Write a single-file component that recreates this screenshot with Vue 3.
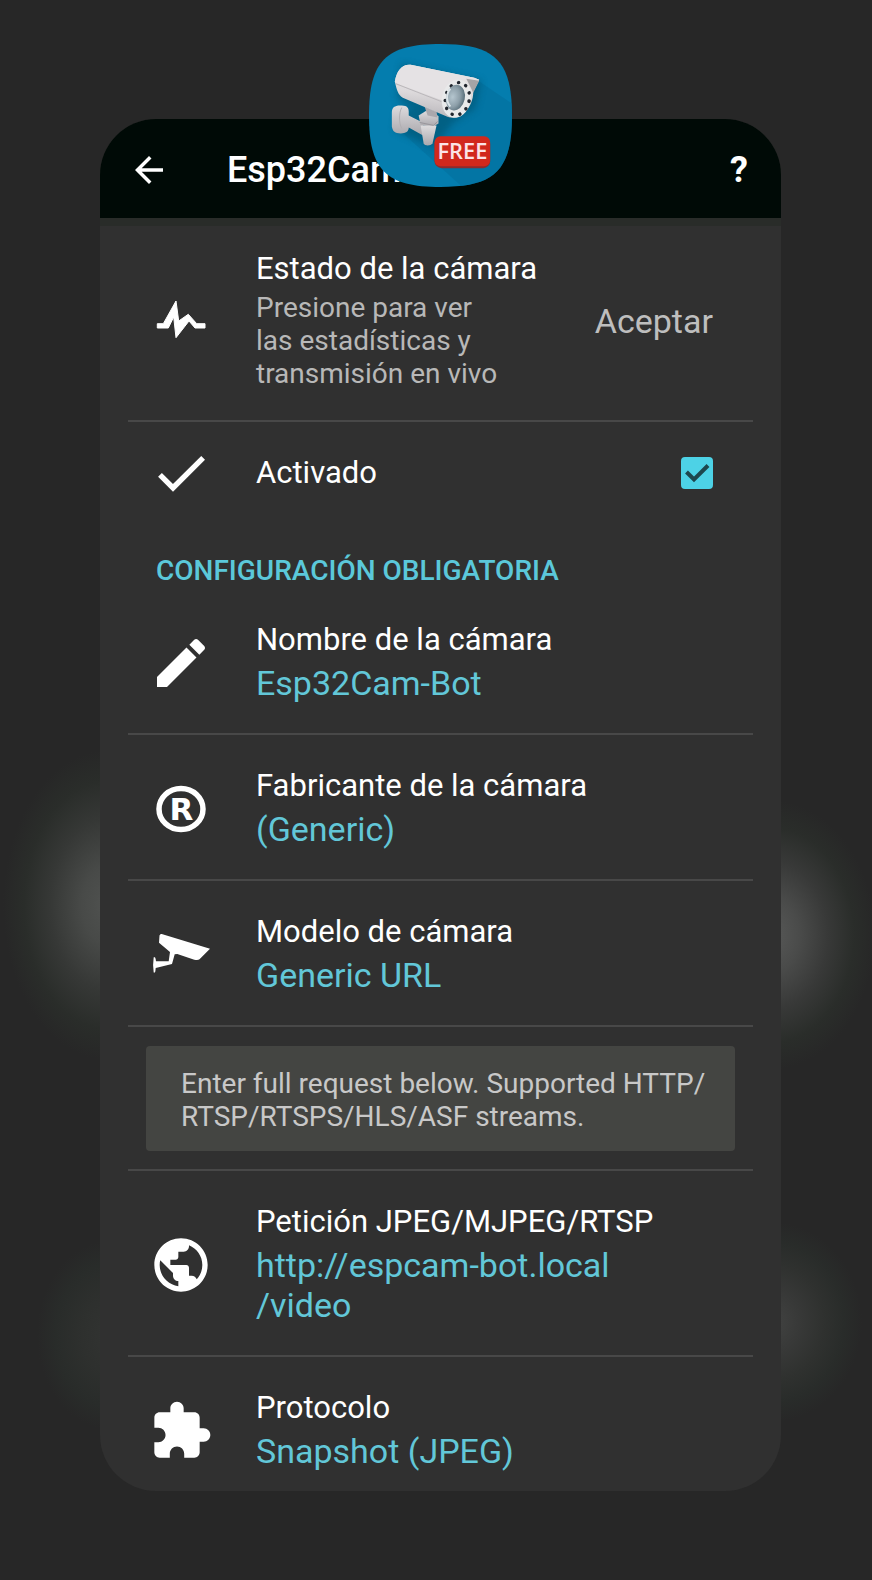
<script setup>
import { ref } from 'vue'

const enabled = ref(true)

const icons = {
  edit: 'M3 17.25V21h3.75L17.81 9.94l-3.75-3.75L3 17.25zM20.71 7.04c.39-.39.39-1.02 0-1.41l-2.34-2.34c-.39-.39-1.02-.39-1.41 0l-1.83 1.83 3.75 3.75 1.83-1.83z',
  globe: 'M12 2C6.48 2 2 6.48 2 12s4.48 10 10 10 10-4.48 10-10S17.52 2 12 2zm-1 17.93c-3.95-.49-7-3.85-7-7.93 0-.62.08-1.21.21-1.79L9 15v1c0 1.1.9 2 2 2v1.93zm6.9-2.54c-.26-.81-1-1.39-1.9-1.39h-1v-3c0-.55-.45-1-1-1H8v-2h2c.55 0 1-.45 1-1V7h2c1.1 0 2-.9 2-2v-.41c2.93 1.19 5 4.06 5 7.41 0 2.08-.8 3.97-2.1 5.39z',
  puzzle: 'M20.5 11H19V7c0-1.1-.9-2-2-2h-4V3.5C13 2.12 11.88 1 10.5 1S8 2.12 8 3.5V5H4c-1.1 0-1.99.9-1.99 2v3.8H3.5c1.49 0 2.7 1.21 2.7 2.7s-1.21 2.7-2.7 2.7H2V20c0 1.1.9 2 2 2h3.8v-1.5c0-1.49 1.21-2.7 2.7-2.7 1.49 0 2.7 1.21 2.7 2.7V22H17c1.1 0 2-.9 2-2v-4h1.5c1.38 0 2.5-1.12 2.5-2.5S21.88 11 20.5 11z'
}
</script>

<template>
  <div class="stage">
    <div class="window">
      <main class="card">
        <header class="bar">
          <button class="back" type="button" aria-label="Atrás">
            <svg viewBox="0 0 24 24" width="42" height="42"><path fill="#fff" d="M20 11H7.83l5.59-5.59L12 4l-8 8 8 8 1.41-1.41L7.83 13H20v-2z" /></svg>
          </button>
          <h1>Esp32Cam</h1>
          <button class="help" type="button">?</button>
        </header>

        <section class="list">
          <div class="row line">
            <svg class="icon pulse" viewBox="0 0 64 64"><path d="M8.300 34.700H14.300L27 12l2.700 20 9.600-6.700 8.400 9.400H56V39H46l-6-7-13 16.700L24.700 28l-5.400 11h-11z" /></svg>
            <div class="text">
              <h2 class="title">Estado de la cámara</h2>
              <p class="summary">Presione para ver las estadísticas y transmisión en vivo</p>
            </div>
            <button class="accept" type="button">Aceptar</button>
          </div>

          <label class="row">
            <svg class="icon" viewBox="0 0 24 24"><path d="M9 16.170L4.830 12l-1.420 1.410L9 19 21 7l-1.410-1.410z" /></svg>
            <span class="text title">Activado</span>
            <span class="tick">
              <input v-model="enabled" type="checkbox" />
              <svg v-if="enabled" viewBox="0 0 32 32"><path d="M5.500 15l7.500 7.500L27 8.500" /></svg>
            </span>
          </label>

          <h2 class="section">CONFIGURACIÓN OBLIGATORIA</h2>

          <button class="row line" type="button">
            <svg class="icon" viewBox="0 0 24 24"><path :d="icons.edit" /></svg>
            <span class="text">
              <span class="title">Nombre de la cámara</span>
              <span class="value">Esp32Cam-Bot</span>
            </span>
          </button>

          <button class="row line" type="button">
            <svg class="icon" viewBox="0 0 64 64">
              <ellipse cx="32" cy="32" rx="22" ry="20.600" class="ring" />
              <text x="32.500" y="43" class="mark">R</text>
            </svg>
            <span class="text">
              <span class="title">Fabricante de la cámara</span>
              <span class="value">(Generic)</span>
            </span>
          </button>

          <button class="row line" type="button">
            <svg class="icon" viewBox="0 0 64 64"><path d="M12.700 11L61 25.700 50.500 36.300Q49 37.500 45.300 36.700L28.300 31l-2.600.3L23 41 6.700 45Q6.500 48 6 49.500H4.700Q3.500 42 4.700 34.300H6Q6.800 36 7 38.300H19.700L21 29 10 19.700 10.500 12.500Q11 10.500 12.700 11z" /></svg>
            <span class="text">
              <span class="title">Modelo de cámara</span>
              <span class="value">Generic URL</span>
            </span>
          </button>

          <div class="notice line">
            <p>Enter full request below. Supported HTTP/<wbr />RTSP/RTSPS/HLS/ASF streams.</p>
          </div>

          <button class="row line" type="button">
            <svg class="icon" viewBox="0 0 24 24"><path :d="icons.globe" /></svg>
            <span class="text">
              <span class="title">Petición JPEG/MJPEG/RTSP</span>
              <span class="value">http://espcam-bot.local<br />/video</span>
            </span>
          </button>

          <button class="row last" type="button">
            <svg class="icon" viewBox="0 0 24 24"><path :d="icons.puzzle" /></svg>
            <span class="text">
              <span class="title">Protocolo</span>
              <span class="value">Snapshot (JPEG)</span>
            </span>
          </button>
        </section>
      </main>

      <svg class="app" viewBox="0 0 144 144" role="img" aria-label="FREE">
        <defs>
          <clipPath id="shape"><path d="M72 0C127 0 144 17 144 72S127 144 72 144 0 127 0 72 17 0 72 0z" /></clipPath>
          <linearGradient id="body" x1="0.500" y1="0" x2="0.350" y2="1">
            <stop offset="0" stop-color="#e9e7e8" />
            <stop offset="0.550" stop-color="#dcd9db" />
            <stop offset="1" stop-color="#b9b6ba" />
          </linearGradient>
          <linearGradient id="arm" x1="0" y1="0" x2="0" y2="1">
            <stop offset="0" stop-color="#dedcde" />
            <stop offset="1" stop-color="#aaa8ad" />
          </linearGradient>
          <radialGradient id="glass" cx="0.350" cy="0.500" r="0.700">
            <stop offset="0" stop-color="#b5c6cf" />
            <stop offset="0.550" stop-color="#8d9fa9" />
            <stop offset="1" stop-color="#4e6470" />
          </radialGradient>
          <filter id="soft" x="-30%" y="-30%" width="160%" height="160%"><feGaussianBlur stdDeviation="3.500" /></filter>
        </defs>
        <g clip-path="url(#shape)">
          <rect width="144" height="144" fill="#047dae" />
          <path d="M110 37l40 27v60l-36 20H94L30 86l40-10z" fill="#036f9d" opacity="0.550" />
          <path d="M33 20l80 17-6 28-23 15-18 25-40-18 4-24 16 4-18-13z" fill="#02526f" opacity="0.600" filter="url(#soft)" />
          <path d="M23 69c0-5 3-7 8-7 6 0 9 1 9 6v4l12 6 6 10-4 4-14-8c0 4-3 6-8 6-6 0-8-2-9-7z" fill="url(#arm)" />
          <path d="M33 64c-3 5-3 16 0 21" fill="none" stroke="#b0aeb2" />
          <path d="M50 72l8-5 8 2 4 4v7l-5 3-13-1z" fill="url(#arm)" />
          <path d="M52 82h16l-4 18c-2 3-8 3-9 0z" fill="url(#arm)" />
          <path d="M51 79l14 3 4-4" fill="none" stroke="#98969b" />
          <path d="M56 63l12 5 1 6-10-2z" fill="#aaa8ad" />
          <path d="M42 21C33 20 28 27 26 38c2 8 3 13 8 16l42 18c5 3 13 3 19-2 7-6 10-14 10-22l6-12-5-2z" fill="url(#body)" />
          <path d="M29 40l45 17c1-9 6-17 14-21 8-2 15-1 20 2l3-2-5-2-64-13C33 20 28 27 26 38z" fill="#e5e2e4" />
          <path d="M27 40l46 18" fill="none" stroke="#b9b6b9" />
          <path d="M98 35l13 2-6 12z" fill="#a5a4a6" />
          <ellipse cx="88" cy="55" rx="14.500" ry="19.500" transform="rotate(12 88 55)" fill="#e8e9ea" />
          <ellipse cx="89" cy="55" rx="12" ry="16.500" transform="rotate(12 88 55)" fill="none" stroke="#20252d" stroke-width="3.500" stroke-linecap="round" stroke-dasharray="0.100 8" />
          <ellipse cx="87" cy="54" rx="9.500" ry="13" transform="rotate(12 87 54)" fill="url(#glass)" />
          <path d="M82 45c-5 5-4 14 0 18" fill="none" stroke="#dce4e8" stroke-width="2" />
          <rect x="66" y="94" width="56" height="31" rx="7" fill="#8e2a2c" />
          <rect x="66" y="93" width="56" height="30" rx="6" fill="#d1281c" />
          <text x="94" y="116" class="free">FREE</text>
        </g>
      </svg>
    </div>
  </div>
</template>

<style>
body {
  margin: 0;
  background: #272727;
}
</style>

<style scoped>
.stage {
  box-sizing: border-box;
  min-height: 100vh;
  padding: 119px 91px 88px 100px;
  font-family: Roboto, "Noto Sans", sans-serif;
  color: #fff;
  background:
    radial-gradient(105px 155px at 108px 905px, #505250 0%, #484a48 25%, #363836 55%, #2a2d2a 80%, #272727 100%) 0 0 / 50% 1120px no-repeat,
    radial-gradient(75px 95px at 112px 215px, #323432 0%, #2e302e 40%, #292c2a 75%, #272727 100%) 0 1120px / 50% 460px no-repeat,
    radial-gradient(105px 135px at calc(100% - 102px) 935px, #585958 0%, #4a4b4a 28%, #383938 55%, #2a2d2a 80%, #272727 100%) 100% 0 / 50% 1120px no-repeat,
    radial-gradient(90px 100px at calc(100% - 100px) 202px, #424342 0%, #383938 30%, #2f312f 58%, #292c2a 80%, #272727 100%) 100% 1120px / 50% 460px no-repeat,
    #272727;
}

.window {
  position: relative;
}

.card {
  overflow: hidden;
  border-radius: 56px;
  background: #303030;
}

.bar {
  position: relative;
  box-sizing: border-box;
  display: flex;
  align-items: center;
  height: 99px;
  padding: 2px 30px 0 28px;
  background: #000a06;
  box-shadow: 0 8px #292c29;
}

button {
  padding: 0;
  border: 0;
  background: none;
  color: inherit;
  font: inherit;
  text-align: left;
  cursor: pointer;
}

.back {
  display: flex;
}

h1 {
  flex: 1;
  margin: 0 0 0 57px;
  font-size: 36px;
  line-height: 42px;
  font-weight: 500;
}

.help {
  width: 24px;
  font-size: 36px;
  line-height: 42px;
  font-weight: 700;
  text-align: center;
}

.list {
  padding: 0 28px;
}

.row {
  box-sizing: border-box;
  display: flex;
  align-items: center;
  width: 100%;
  padding: 33px 40px 30px 21px;
}

.line {
  border-bottom: 2px solid #484848;
}

.last {
  padding-bottom: 20px;
}

.icon {
  flex: none;
  width: 64px;
  height: 64px;
  margin: -14px 43px -14px 0;
  fill: #fff;
}

.pulse {
  stroke: #fff;
}

.ring {
  fill: none;
  stroke: #fff;
  stroke-width: 5.5;
}

.mark {
  font: bold 31px "DejaVu Sans", sans-serif;
  text-anchor: middle;
}

.text {
  flex: 1;
  min-width: 0;
}

.title {
  display: block;
  margin: 0;
  font-size: 31px;
  line-height: 36px;
  font-weight: 400;
}

.value {
  display: block;
  margin-top: 5px;
  font-size: 34px;
  line-height: 40px;
  color: #62c7d8;
}

.summary {
  max-width: 250px;
  margin: 4px 0 0;
  font-size: 28px;
  line-height: 33px;
  color: #b8b8b8;
}

.accept {
  margin-left: 24px;
  font-size: 34px;
  line-height: 40px;
  color: #bebebe;
}

.tick {
  position: relative;
  width: 32px;
  height: 32px;
}

.tick input {
  appearance: none;
  display: block;
  width: 32px;
  height: 32px;
  margin: 0;
  border: 3px solid #b8b8b8;
  border-radius: 4px;
}

.tick input:checked {
  border-color: #4dd2e6;
  background: #4dd2e6;
}

.tick svg {
  position: absolute;
  inset: 0;
  fill: none;
  stroke: #1d474e;
  stroke-width: 4;
  pointer-events: none;
}

.section {
  margin: 0;
  padding: 33px 29px 2px 28px;
  font-size: 28px;
  line-height: 33px;
  font-weight: 500;
  color: #5bc8da;
}

.notice {
  padding: 19px 0 18px;
}

.notice p {
  margin: 0 18px;
  padding: 21px 24px 18px 35px;
  border-radius: 4px;
  background: #444542;
  font-size: 28px;
  line-height: 33px;
  color: #c8c8c8;
}

.app {
  position: absolute;
  top: -75px;
  left: 50%;
  width: 143px;
  height: 143px;
  margin-left: -72px;
}

.free {
  font: 600 22px "Open Sans", "Noto Sans", sans-serif;
  fill: #fbe3e6;
  text-anchor: middle;
}
</style>
